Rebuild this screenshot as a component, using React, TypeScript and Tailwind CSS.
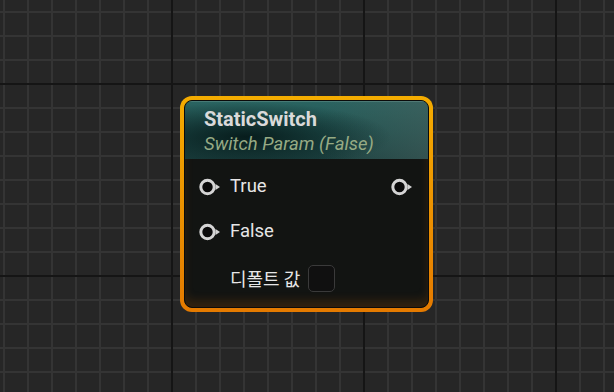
import React from 'react';

function Pin() {
  return (
    <svg width="22" height="18" viewBox="0 0 22 18" className="shrink-0">
      <circle cx="8.5" cy="9" r="6.7" fill="#0a0a0a" stroke="#d4d4d4" strokeWidth="3" />
      <polygon points="16.5,6 21,9 16.5,12" fill="#d4d4d4" />
    </svg>
  );
}

export default function App() {
  return (
    <div
      className="relative w-[614px] h-[392px] overflow-hidden bg-[#262626] bg-[linear-gradient(to_right,#151515_2px,transparent_2px),linear-gradient(to_bottom,#151515_2px,transparent_2px),linear-gradient(to_right,#343434_2px,transparent_2px),linear-gradient(to_bottom,#343434_2px,transparent_2px)] bg-[size:192px_192px,192px_192px,24px_24px,24px_24px] bg-[position:171px_83px,171px_83px,3px_11px,3px_11px]"
      style={{ fontFamily: 'Roboto, "Noto Sans CJK KR", sans-serif' }}
    >
      {/* node */}
      <div className="absolute left-[180px] top-[96px] w-[253px] h-[216px] rounded-[12px] p-[4px] bg-[linear-gradient(to_bottom,#f4ac00,#e47a00)]">
        <div className="h-full w-full rounded-[8px] border border-[#0b0b0b] bg-[#121412] overflow-hidden flex flex-col shadow-[inset_0_-7px_9px_rgba(190,95,0,0.18)]">
          {/* header */}
          <div className="h-[58px] shrink-0 pl-[19px] pt-[5px] flex flex-col bg-[radial-gradient(ellipse_60%_60%_at_25%_62%,rgba(6,26,26,0.95),transparent),linear-gradient(to_right,transparent_55%,rgba(70,95,92,0.55)),linear-gradient(to_bottom,#2a6461,#215250_55%,#1c4241)] shadow-[inset_0_1px_0_rgba(140,175,170,0.3)]">
            <div className="text-[20px] font-bold text-[#dadada] leading-[26px]">StaticSwitch</div>
            <div className="text-[18.5px] italic text-[#96aa84] leading-[24px]">Switch Param (False)</div>
          </div>
          {/* rows */}
          <div className="flex flex-col pt-[16px] pl-[14px] pr-[15px]">
            <div className="flex items-center h-[24px]">
              <Pin />
              <span className="ml-[9px] text-[18.5px] text-[#e6e6e6]">True</span>
              <div className="ml-auto">
                <Pin />
              </div>
            </div>
            <div className="flex items-center h-[24px] mt-[21px]">
              <Pin />
              <span className="ml-[9px] text-[18.5px] text-[#e6e6e6]">False</span>
            </div>
            <div className="flex items-center h-[28px] mt-[20px] pl-[31px]">
              <span className="text-[18px] text-[#e6e6e6]" style={{ fontFamily: '"Noto Sans CJK KR", sans-serif' }}>디폴트 값</span>
              <div className="ml-[8px] w-[27px] h-[27px] rounded-[5px] border-[1.5px] border-[#3a3a3a] bg-[#101010]" />
            </div>
          </div>
        </div>
      </div>
    </div>
  );
}
